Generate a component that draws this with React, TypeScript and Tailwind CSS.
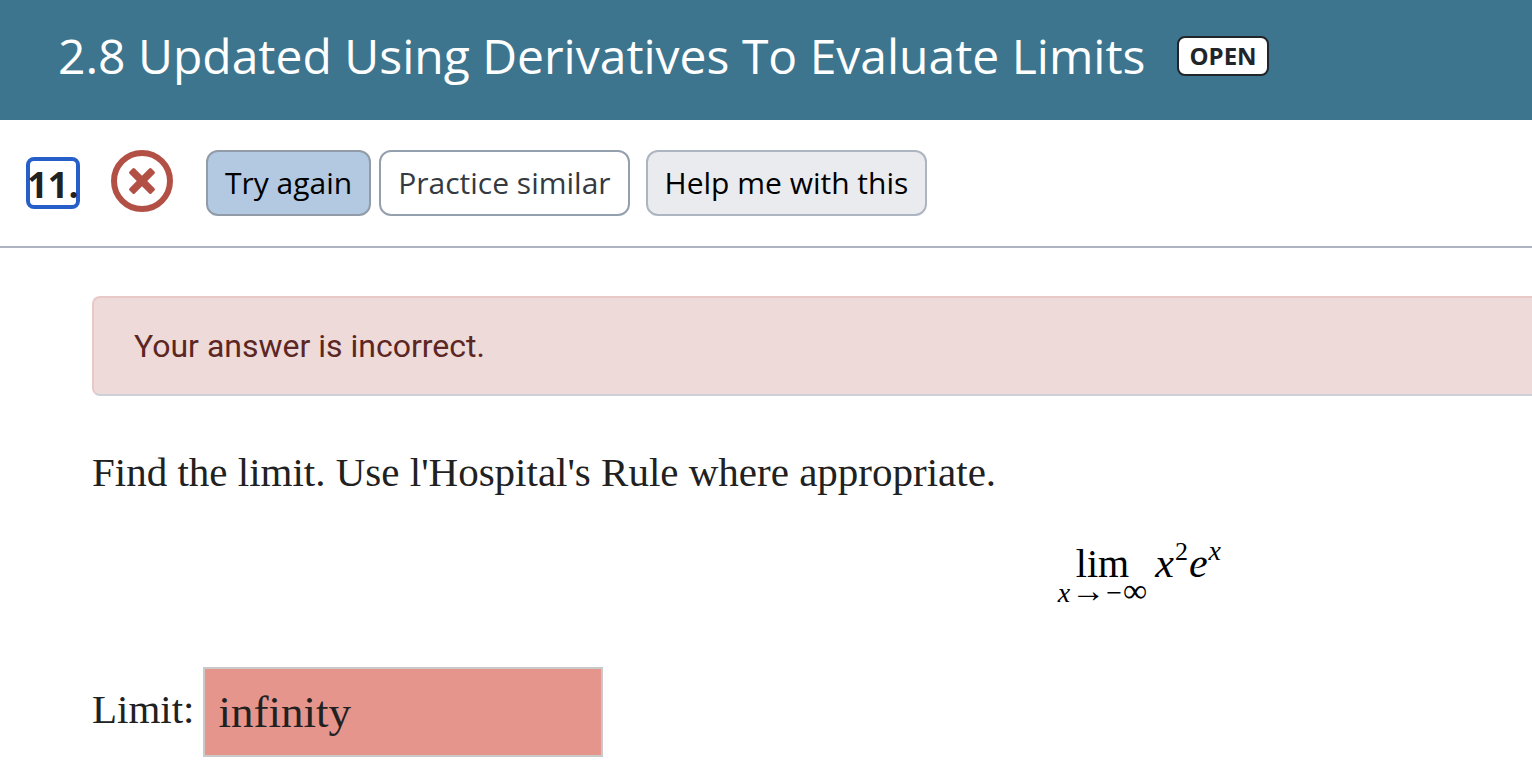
import { useState } from "react";

function IncorrectIcon() {
  return (
    <svg
      viewBox="0 0 62 62"
      className="h-[62px] w-[62px]"
      role="img"
      aria-label="Incorrect"
    >
      <circle cx="31" cy="31" r="28" fill="none" stroke="#b35046" strokeWidth="6" />
      <g fill="#b35046">
        <rect x="15.5" y="27.3" width="31" height="7.4" rx="1.6" transform="rotate(45 31 31)" />
        <rect x="15.5" y="27.3" width="31" height="7.4" rx="1.6" transform="rotate(-45 31 31)" />
      </g>
    </svg>
  );
}

function LimitExpression() {
  return (
    <div className="flex items-baseline gap-2 font-['Liberation_Serif',serif] text-black">
      <div className="flex flex-col items-center">
        <span className="text-[40px] leading-9">lim</span>
        <span className="flex items-baseline gap-px pt-[5px] text-[28px] leading-2">
          <i>x</i>
          <span className="text-[34px]">→</span>
          <span>−</span>
          <span className="text-[34px]">∞</span>
        </span>
      </div>
      <div className="flex items-baseline gap-px text-[42px] leading-10">
        <i>x</i>
        <sup className="top-0 pb-4 text-[26px] leading-none">
          <span className="inline-block align-[17px]">2</span>
        </sup>
        <i>e</i>
        <sup className="top-0 pb-4 text-[28px] leading-none">
          <i className="inline-block align-[17px]">x</i>
        </sup>
      </div>
    </div>
  );
}

export default function App() {
  const [answer, setAnswer] = useState("infinity");

  return (
    <div className="min-h-screen overflow-x-hidden bg-white font-['Open_Sans',sans-serif] text-[#212529]">
      <header className="flex items-center gap-8 bg-[#3d758f] pt-5 pr-8 pb-7 pl-[58px]">
        <h1 className="text-5xl leading-[72px] whitespace-nowrap text-white">
          2.8 Updated Using Derivatives To Evaluate Limits
        </h1>
        <span className="rounded-lg border-2 border-[#212529] bg-white px-[10px] text-2xl leading-9 font-bold">
          OPEN
        </span>
      </header>

      <div className="flex items-center border-b-2 border-[#aeb4bf] py-[30px] pl-[26px] text-[30px]">
        <h2 className="flex h-[52px] w-[54px] items-center justify-center rounded-lg border-4 border-[#275fc9] pt-1 text-4xl font-bold text-[#212121]">
          11.
        </h2>
        <div className="ml-[31px] pb-1">
          <IncorrectIcon />
        </div>
        <button
          type="button"
          className="ml-[33px] rounded-xl border-2 border-[#919ca8] bg-[#b2c9e1] px-[17px] leading-[62px] text-black"
        >
          Try again
        </button>
        <button
          type="button"
          className="ml-2 rounded-xl border-2 border-[#94a0ae] bg-white px-[17px] leading-[62px] text-[#343a40]"
        >
          Practice similar
        </button>
        <button
          type="button"
          className="ml-4 rounded-xl border-2 border-[#adb5c1] bg-[#eaebef] px-[17px] leading-[62px] text-black"
        >
          Help me with this
        </button>
      </div>

      <main className="pt-12 pl-[92px] font-['Liberation_Serif',serif] text-[#212121]">
        <div
          role="alert"
          className="rounded-l-lg border-2 border-r-0 border-[#e9c8c8] border-b-[#ced0d8] bg-[#eedad9] px-10 font-[Roboto,sans-serif] text-[32px] leading-24 text-[#5c2623]"
        >
          Your answer is incorrect.
        </div>
        <p className="mt-12 text-[41px] leading-14">
          Find the limit. Use l'Hospital's Rule where appropriate.
        </p>
        <div className="mt-[37px] flex justify-end pr-[311px]">
          <LimitExpression />
        </div>
        <div className="mt-[69px] flex items-center gap-2">
          <label htmlFor="limit" className="pb-[6px] text-[41px] leading-14">
            Limit:
          </label>
          <input
            id="limit"
            type="text"
            value={answer}
            onChange={(e) => setAnswer(e.target.value)}
            className="h-[90px] w-[400px] border-2 border-[#c9c9c9] bg-[#e5958c] px-[14px] text-[45px]"
          />
        </div>
      </main>
    </div>
  );
}
